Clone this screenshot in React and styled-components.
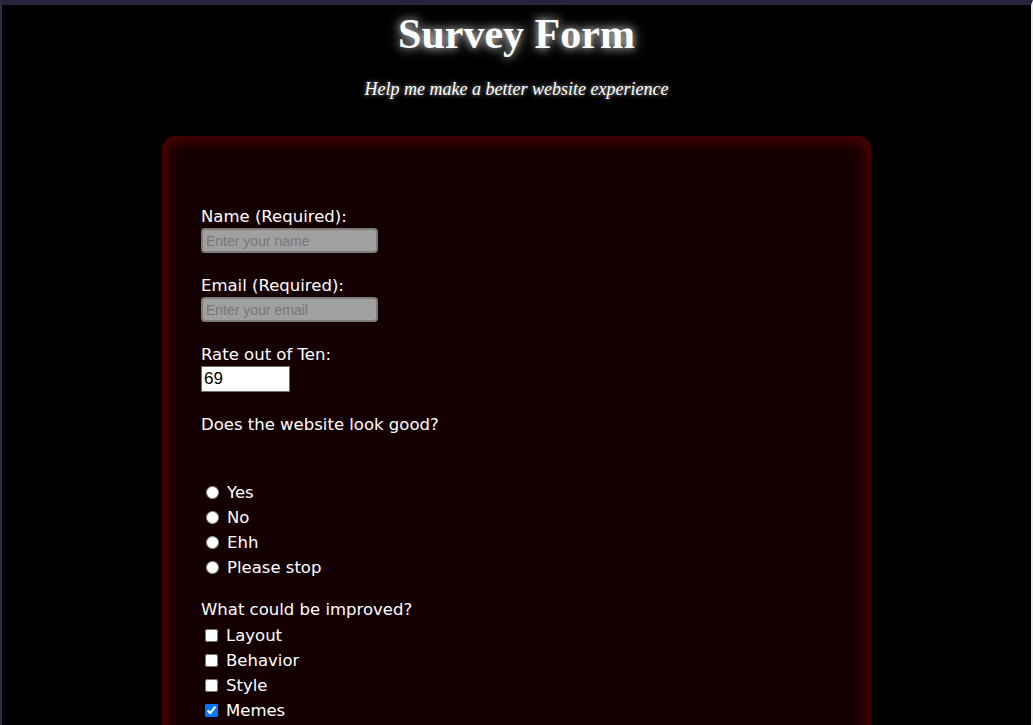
import React from 'react';
import styled, { createGlobalStyle } from 'styled-components';

const GlobalStyle = createGlobalStyle`
  html, body {
    margin: 0;
    padding: 0;
    background: #000;
  }
`

const Page = styled.div`
  min-height: 100vh;
  box-sizing: border-box;
  background: #000;
  border-top: 5px solid #24243c;
  border-left: 2px solid #2c2c44;
  border-right: 2px solid #ececec;
  overflow: hidden;
`

const Header = styled.header`
  text-align: center;
  padding-top: 6px;
`

const Title = styled.h1`
  margin: 0;
  font-family: "Liberation Serif", "Times New Roman", serif;
  font-weight: bold;
  font-size: 42px;
  line-height: 46px;
  color: #fff;
  text-shadow: 0 0 8px rgba(255, 255, 255, 0.8), 0 0 16px rgba(255, 255, 255, 0.4);
`

const Description = styled.p`
  margin: 21px 0 0;
  font-family: "Liberation Serif", "Times New Roman", serif;
  font-style: italic;
  font-size: 18px;
  line-height: 22px;
  color: #fff;
  text-shadow: 0 0 4px rgba(255, 255, 255, 0.7);
`

const Card = styled.form`
  width: 709px;
  box-sizing: border-box;
  margin: 36px auto 0;
  padding: 71px 39px 40px;
  min-height: 700px;
  background: #140002;
  border-radius: 14px;
  box-shadow: inset 0 0 14px 6px #4e0000, 0 0 2px #300000;
  font-family: "Comic Sans MS", "DejaVu Sans", sans-serif;
  color: #fff;
`

const Field = styled.div`
  margin-bottom: ${p => p.$gap || 23}px;
`

const Label = styled.label`
  display: block;
  font-size: 16.5px;
  line-height: 20px;
  margin-bottom: 1px;
`

const Question = styled.p`
  margin: 0 0 ${p => p.$gap || 0}px;
  font-size: 16.5px;
  line-height: 20px;
`

const TextInput = styled.input`
  display: block;
  box-sizing: border-box;
  width: 177px;
  height: 25px;
  padding: 0 3px;
  background: #a0a0a0;
  border: 2px solid #7c7c7c;
  border-radius: 4px;
  font-family: "Liberation Sans", Arial, sans-serif;
  font-size: 14px;
  color: #222;
  &::placeholder {
    color: #777;
  }
`

const NumberInput = styled.input`
  display: block;
  box-sizing: border-box;
  width: 89px;
  height: 26px;
  padding: 0 2px;
  background: #fff;
  border: 1px solid #6e6e6e;
  border-radius: 0;
  font-family: "Liberation Sans", Arial, sans-serif;
  font-size: 17px;
  color: #000;
  -moz-appearance: textfield;
  &::-webkit-inner-spin-button,
  &::-webkit-outer-spin-button {
    -webkit-appearance: none;
    margin: 0;
  }
`

const OptionList = styled.div`
  display: flex;
  flex-direction: column;
  margin-bottom: ${p => p.$gap || 0}px;
`

const Option = styled.label`
  display: flex;
  align-items: center;
  height: 25px;
  font-size: 16.5px;
  input {
    margin: 0 8px 0 ${p => (p.$box ? 4 : 5)}px;
    width: 13px;
    height: 13px;
    accent-color: #0075ff;
  }
`

const ratings = ['Yes', 'No', 'Ehh', 'Please stop'];
const improvements = [
  { name: 'Layout' },
  { name: 'Behavior' },
  { name: 'Style' },
  { name: 'Memes', checked: true },
];

const App = () => {
  return (
    <Page>
      <GlobalStyle />
      <Header>
        <Title>Survey Form</Title>
        <Description>Help me make a better website experience</Description>
      </Header>
      <Card onSubmit={e => e.preventDefault()}>
        <Field>
          <Label htmlFor="name">Name (Required):</Label>
          <TextInput id="name" type="text" placeholder="Enter your name" required />
        </Field>
        <Field>
          <Label htmlFor="email">Email (Required):</Label>
          <TextInput id="email" type="email" placeholder="Enter your email" required />
        </Field>
        <Field $gap={23}>
          <Label htmlFor="rate">Rate out of Ten:</Label>
          <NumberInput id="rate" type="number" defaultValue={69} />
        </Field>
        <Question $gap={45}>Does the website look good?</Question>
        <OptionList $gap={20}>
          {ratings.map(r => (
            <Option key={r}>
              <input type="radio" name="looks" value={r} />
              {r}
            </Option>
          ))}
        </OptionList>
        <Question $gap={3}>What could be improved?</Question>
        <OptionList>
          {improvements.map(i => (
            <Option key={i.name} $box>
              <input type="checkbox" defaultChecked={i.checked} />
              {i.name}
            </Option>
          ))}
        </OptionList>
      </Card>
    </Page>
  );
};

export default App;
